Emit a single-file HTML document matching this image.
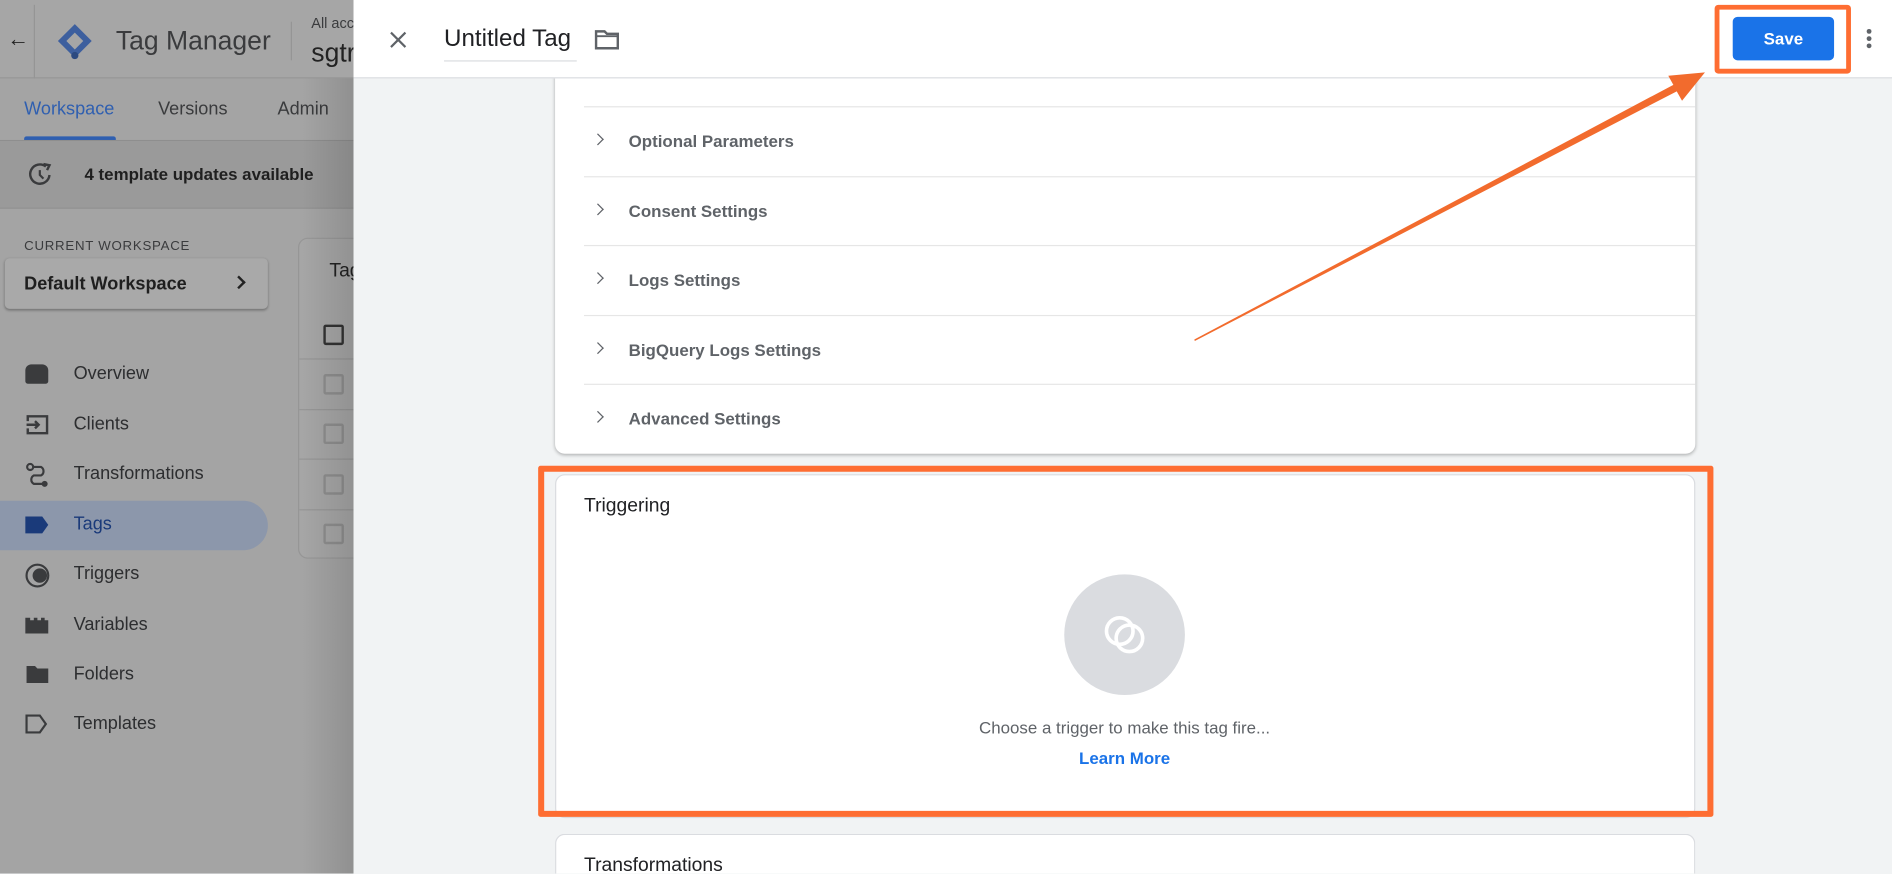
<!DOCTYPE html>
<html><head><meta charset="utf-8">
<style>
*{box-sizing:border-box;margin:0;padding:0}
html,body{width:1892px;height:874px;overflow:hidden;background:#f1f3f4}
#w{position:absolute;left:0;top:0;width:1568px;height:724px;overflow:hidden;transform:scale(1.20663);transform-origin:0 0;font-family:"Liberation Sans",sans-serif;white-space:nowrap}
.a{position:absolute}
.left{left:0;top:0;width:293px;height:724px;background:#a4a4a4;overflow:hidden}
.nav{position:absolute;left:61px;font-size:15px;color:#2d2e30}
.ico{position:absolute;left:21px;width:19px;height:16px}
.row{position:absolute;left:484px;width:921px;border-top:1px solid #e6e6e6}
.rt{position:absolute;left:521px;font-size:14px;color:#5f6368;font-weight:bold;transform:translateY(-50%)}
.chev{position:absolute;left:492px;width:7px;height:7px;border-right:1.5px solid #5f6368;border-top:1.5px solid #5f6368;transform:rotate(45deg)}
.cb{position:absolute;left:268px;width:17px;height:17px;border:2px solid #8e8e8e;border-radius:2px}
</style></head><body><div id="w">

<div class="a left">
  <div class="a" style="left:0;top:0;width:293px;height:65px;background:#a6a6a6;border-bottom:1px solid #979797"></div>
  <div class="a" style="left:28px;top:4px;width:1px;height:61px;background:#959595"></div>
  <div class="a" style="left:6px;top:22px;font-size:18px;color:#222">&#8592;</div>
  <svg class="a" style="left:46px;top:18px" width="32" height="32" viewBox="0 0 32 32"><path d="M16 2 L30 16 L16 30 L2 16Z" fill="#3d5f9e"/><path d="M16 9 L23 16 L16 23 L9 16Z" fill="#a6a6a6"/><circle cx="16" cy="28" r="3" fill="#2c4a80"/></svg>
  <div class="a" style="left:96px;top:21px;font-size:22px;color:#3a3b3d">Tag Manager</div>
  <div class="a" style="left:241px;top:18px;width:1px;height:32px;background:#959595"></div>
  <div class="a" style="left:258px;top:12px;font-size:12px;color:#3a3b3d">All acc</div>
  <div class="a" style="left:258px;top:31px;font-size:22px;color:#222">sgtr</div>
  <div class="a" style="left:20px;top:82px;font-size:15px;color:#2f5fb0">Workspace</div>
  <div class="a" style="left:131px;top:82px;font-size:15px;color:#3a3b3d">Versions</div>
  <div class="a" style="left:230px;top:82px;font-size:15px;color:#3a3b3d">Admin</div>
  <div class="a" style="left:20px;top:113px;width:76px;height:3px;background:#2f5fb0;border-radius:2px 2px 0 0"></div>
  <div class="a" style="left:0;top:116px;width:293px;height:1px;background:#8e8e8e"></div>
  <div class="a" style="left:0;top:117px;width:293px;height:56px;background:#9a9a9a;border-bottom:1px solid #929292"></div>
  <svg class="a" style="left:22px;top:134px" width="22" height="22" viewBox="0 0 22 22"><path d="M16 4 A8 8 0 1 0 19 11" fill="none" stroke="#3a3b3d" stroke-width="2"/><path d="M14 2 L19 3 L17 7" fill="none" stroke="#3a3b3d" stroke-width="2"/><path d="M11 7 V11 L14 14" fill="none" stroke="#3a3b3d" stroke-width="1.8"/></svg>
  <div class="a" style="left:70px;top:136px;font-size:14px;color:#1f1f1f;font-weight:bold">4 template updates available</div>
  <div class="a" style="left:20px;top:198px;font-size:11px;color:#3a3b3d;letter-spacing:.6px">CURRENT WORKSPACE</div>
  <div class="a" style="left:4px;top:214px;width:218px;height:42px;background:#a9a9a9;border-radius:4px;box-shadow:0 1px 2px rgba(0,0,0,.3)"></div>
  <div class="a" style="left:20px;top:227px;font-size:15px;font-weight:bold;color:#1f1f1f">Default Workspace</div>
  <div class="a" style="left:194px;top:230px;width:8px;height:8px;border-right:2px solid #222;border-top:2px solid #222;transform:rotate(45deg)"></div>
  <div class="a" style="left:247px;top:197px;width:60px;height:266px;background:#a6a6a6;border:1px solid #969696;border-radius:8px"></div>
  <div class="a" style="left:273px;top:216px;font-size:16px;color:#222">Tag</div>
  <div class="cb" style="top:269px;border-color:#333"></div>
  <div class="a" style="left:248px;top:297px;width:45px;height:1px;background:#969696"></div>
  <div class="cb" style="top:310px"></div>
  <div class="a" style="left:248px;top:339px;width:45px;height:1px;background:#969696"></div>
  <div class="cb" style="top:351px"></div>
  <div class="a" style="left:248px;top:380px;width:45px;height:1px;background:#969696"></div>
  <div class="cb" style="top:393px"></div>
  <div class="a" style="left:248px;top:422px;width:45px;height:1px;background:#969696"></div>
  <div class="cb" style="top:434px"></div>

  <div class="a" style="left:0;top:415px;width:222px;height:41px;background:#8c97ab;border-radius:0 21px 21px 0"></div>
  <div class="ico" style="top:302px;background:#3a3b3d;border-radius:5px 5px 2px 2px"></div>
  <div class="nav" style="top:301px">Overview</div>
  <svg class="a" style="left:20px;top:343px" width="22" height="18" viewBox="0 0 22 18"><path d="M3 6 V2 H19 V16 H3 V12" fill="none" stroke="#3a3b3d" stroke-width="2"/><path d="M2 9 H12 M9 6 L12 9 L9 12" fill="none" stroke="#3a3b3d" stroke-width="2"/></svg>
  <div class="nav" style="top:343px">Clients</div>
  <svg class="a" style="left:20px;top:383px" width="22" height="22" viewBox="0 0 22 22"><circle cx="5" cy="4" r="2.5" fill="none" stroke="#3a3b3d" stroke-width="1.8"/><path d="M7 4 H14 A4 4 0 0 1 14 11 H8 A4 4 0 0 0 8 18 H15" fill="none" stroke="#3a3b3d" stroke-width="1.8"/><circle cx="17" cy="18" r="2.5" fill="#3a3b3d"/></svg>
  <div class="nav" style="top:384px">Transformations</div>
  <svg class="a" style="left:20px;top:427px" width="22" height="16" viewBox="0 0 22 16"><path d="M1 1 H15 L20 8 L15 15 H1Z" fill="#1a3a7a"/></svg>
  <div class="nav" style="top:426px;color:#1a3a7a">Tags</div>
  <svg class="a" style="left:20px;top:466px" width="22" height="22" viewBox="0 0 22 22"><circle cx="11" cy="11" r="9" fill="none" stroke="#3a3b3d" stroke-width="1.8"/><circle cx="13" cy="11" r="6" fill="#3a3b3d"/></svg>
  <div class="nav" style="top:467px">Triggers</div>
  <svg class="a" style="left:20px;top:510px" width="22" height="16" viewBox="0 0 22 16"><path d="M1 2 H5 V4 H8 V2 H11 V4 H14 V2 H17 V4 H20 V15 H1Z" fill="#3a3b3d"/></svg>
  <div class="nav" style="top:509px">Variables</div>
  <svg class="a" style="left:20px;top:550px" width="22" height="18" viewBox="0 0 22 18"><path d="M2 2 H9 L11 4 H20 V16 H2Z" fill="#3a3b3d"/></svg>
  <div class="nav" style="top:550px">Folders</div>
  <svg class="a" style="left:20px;top:591px" width="22" height="18" viewBox="0 0 22 18"><path d="M2 2 H13 L18 9 L13 16 H2Z" fill="none" stroke="#3a3b3d" stroke-width="1.8"/></svg>
  <div class="nav" style="top:591px">Templates</div>
  <div class="a" style="left:250px;top:65px;width:43px;height:659px;background:linear-gradient(90deg,rgba(0,0,0,0),rgba(0,0,0,.12))"></div>
</div>

<!-- right panel -->
<div class="a" style="left:293px;top:0;width:1275px;height:724px;background:#f1f3f4"></div>
<div class="a" style="left:460px;top:55px;width:945px;height:321px;background:#fff;border-radius:0 0 8px 8px;box-shadow:0 1px 3px rgba(0,0,0,.3)"></div>
<div class="a" style="left:293px;top:0;width:1275px;height:65px;background:#fff;border-bottom:1px solid #dadce0"></div>
<svg class="a" style="left:322px;top:25px" width="16" height="16" viewBox="0 0 16 16"><path d="M2 2 L14 14 M14 2 L2 14" stroke="#5f6368" stroke-width="1.8"/></svg>
<div class="a" style="left:368px;top:21px;font-size:20px;color:#202124">Untitled Tag</div>
<div class="a" style="left:368px;top:50px;width:110px;height:1px;background:#dadce0"></div>
<svg class="a" style="left:492px;top:24px" width="22" height="18" viewBox="0 0 22 18"><path d="M2 2 H9 L11 4 H20 V16 H2Z" fill="none" stroke="#5f6368" stroke-width="2"/><path d="M2 6 H20" stroke="#5f6368" stroke-width="1.5"/></svg>
<div class="a" style="left:1421px;top:4px;width:113px;height:57px;border:4px solid #fe6d32;border-radius:3px"></div>
<div class="a" style="left:1436px;top:14px;width:84px;height:36px;background:#1a73e8;border-radius:4px;color:#fff;font-size:14px;font-weight:bold;text-align:center;line-height:36px">Save</div>
<div class="a" style="left:1547px;top:24px;width:4px;height:4px;border-radius:2px;background:#5f6368;box-shadow:0 6px 0 #5f6368,0 12px 0 #5f6368"></div>

<div class="row" style="top:88px"></div>
<div class="row" style="top:146px"></div>
<div class="row" style="top:203px"></div>
<div class="row" style="top:261px"></div>
<div class="row" style="top:318px"></div>
<div class="chev" style="top:112px"></div><div class="rt" style="top:117px">Optional Parameters</div>
<div class="chev" style="top:170px"></div><div class="rt" style="top:175px">Consent Settings</div>
<div class="chev" style="top:227px"></div><div class="rt" style="top:232px">Logs Settings</div>
<div class="chev" style="top:285px"></div><div class="rt" style="top:290px">BigQuery Logs Settings</div>
<div class="chev" style="top:342px"></div><div class="rt" style="top:347px">Advanced Settings</div>

<div class="a" style="left:460px;top:393px;width:945px;height:285px;background:#fff;border:1px solid #dadce0;border-radius:8px"></div>
<div class="a" style="left:446px;top:386px;width:974px;height:291px;border:5px solid #fe6d32;border-radius:2px"></div>
<div class="a" style="left:484px;top:411px;font-size:16px;color:#202124">Triggering</div>
<div class="a" style="left:882px;top:476px;width:100px;height:100px;border-radius:50%;background:#dadce0"></div>
<svg class="a" style="left:902px;top:496px" width="60" height="60" viewBox="0 0 60 60"><circle cx="26" cy="27" r="11" fill="none" stroke="#fff" stroke-width="3"/><circle cx="34" cy="33" r="11" fill="none" stroke="#fff" stroke-width="3"/></svg>
<div class="a" style="left:632px;top:595px;width:600px;text-align:center;font-size:14px;color:#5f6368">Choose a trigger to make this tag fire...</div>
<div class="a" style="left:632px;top:620px;width:600px;text-align:center;font-size:14px;color:#1a73e8;font-weight:bold">Learn More</div>

<div class="a" style="left:460px;top:691px;width:945px;height:33px;background:#fff;border:1px solid #dadce0;border-bottom:none;border-radius:8px 8px 0 0"></div>
<div class="a" style="left:484px;top:709px;font-size:16px;color:#202124">Transformations</div>

<svg class="a" style="left:0;top:0" width="1568" height="724"><polygon points="990.2,282.6 1389.6,75.7 1394,83.5 1413,60 1382.6,62.8 1386.8,70.3 989.8,281.4" fill="#f26b2d"/></svg>
</div></body></html>
